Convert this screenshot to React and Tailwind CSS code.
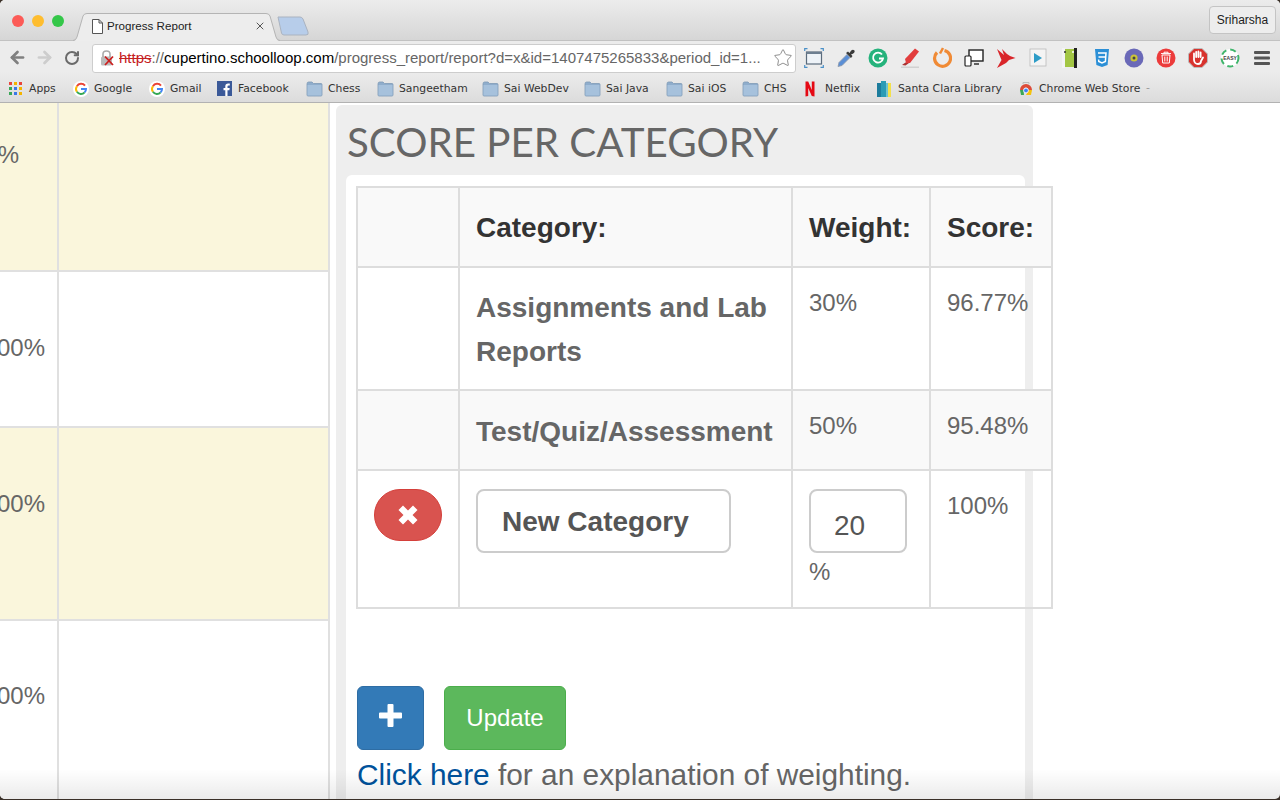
import React from "react";
import { ArrowLeft, ArrowRight, RotateCw, Star, X } from "lucide-react";

// bookmark bar icons
const FolderIcon = () => (
  <svg width="17" height="16" viewBox="0 0 17 16">
    <path d="M1 3 Q1 1 2.5 1 H6 L7.5 2.5 H15 Q16 2.5 16 3.5 V14 Q16 15 15 15 H2 Q1 15 1 14 Z" fill="#8fadcc" stroke="#7f9ab6" strokeWidth="0.8" />
    <rect x="1.5" y="4" width="14" height="10.5" fill="#a6c1dc" />
  </svg>
);

const GoogleIcon = () => (
  <svg width="16" height="16" viewBox="0 0 16 16">
    <circle cx="8" cy="8" r="8" fill="#fff" />
    <path d="M12 4.6 A5 5 0 0 0 3.9 5.2" fill="none" stroke="#ea4335" strokeWidth="2" />
    <path d="M3.9 5.2 A5 5 0 0 0 3.9 10.8" fill="none" stroke="#fbbc05" strokeWidth="2" />
    <path d="M3.9 10.8 A5 5 0 0 0 11.6 11.4" fill="none" stroke="#34a853" strokeWidth="2" />
    <path d="M11.6 11.4 A5 5 0 0 0 13 8 H8" fill="none" stroke="#4285f4" strokeWidth="2" />
  </svg>
);

const AppsIcon = () => {
  const colors = ["#e8453c", "#f4b400", "#e8453c", "#3aa757", "#3b78e7", "#f4b400", "#3aa757", "#3b78e7", "#f4b400"];
  return (
    <div className="grid grid-cols-3 gap-[2px] w-[13px]">
      {colors.map((c, i) => (
        <svg key={i} width="3" height="3"><rect width="3" height="3" fill={c} /></svg>
      ))}
    </div>
  );
};

const FacebookIcon = () => (
  <svg width="15" height="15" viewBox="0 0 15 15">
    <rect width="15" height="15" fill="#3b5998" />
    <path d="M10.5 15 V9.2 H12.4 L12.7 7 H10.5 V5.6 Q10.5 4.5 11.7 4.5 H12.8 V2.5 H11.2 Q8.3 2.5 8.3 5.3 V7 H6.5 V9.2 H8.3 V15 Z" fill="#fff" />
  </svg>
);

const NetflixIcon = () => (
  <svg width="10" height="16" viewBox="0 0 10 16">
    <path d="M0.5 0.5 H3.2 L6.8 9 V0.5 H9.5 V15.5 L6.8 15 L3.2 7 V15 L0.5 15.5 Z" fill="#e50914" />
  </svg>
);

const LibraryIcon = () => (
  <svg width="14" height="17" viewBox="0 0 14 17">
    <rect x="0" y="3" width="4" height="14" fill="#1c7c9c" />
    <rect x="4" y="1" width="5" height="16" fill="#2a9bb5" />
    <rect x="9" y="3" width="2" height="14" fill="#6fc3d0" />
    <rect x="11" y="3" width="3" height="14" fill="#f3e04b" />
  </svg>
);

const WebStoreIcon = () => (
  <svg width="14" height="16" viewBox="0 0 14 16">
    <path d="M4 3 V1.5 H10 V3" fill="none" stroke="#bbb" strokeWidth="1" />
    <path d="M1 9 A6 6 0 0 1 13 9 H9.5 A2.5 2.5 0 0 0 4.5 9 Z" fill="#dd4b39" />
    <path d="M1 9 H4.5 L5 14 H2 Z" fill="#3aa757" />
    <path d="M9.5 9 H13 L12 14 H7 Z" fill="#f4c20d" />
    <circle cx="7" cy="9.5" r="2.4" fill="#4285f4" stroke="#fff" strokeWidth="0.8" />
  </svg>
);

const bookmarks = [
  { label: "Apps", icon: <AppsIcon />, width: "w-[64px]", gap: "gap-[7px]" },
  { label: "Google", icon: <GoogleIcon />, width: "w-[76px]", gap: "gap-[5px]" },
  { label: "Gmail", icon: <GoogleIcon />, width: "w-[68px]", gap: "gap-[5px]" },
  { label: "Facebook", icon: <FacebookIcon />, width: "w-[89px]", gap: "gap-[6px]" },
  { label: "Chess", icon: <FolderIcon />, width: "w-[71px]", gap: "gap-[5px]" },
  { label: "Sangeetham", icon: <FolderIcon />, width: "w-[105px]", gap: "gap-[5px]" },
  { label: "Sai WebDev", icon: <FolderIcon />, width: "w-[102px]", gap: "gap-[5px]" },
  { label: "Sai Java", icon: <FolderIcon />, width: "w-[82px]", gap: "gap-[5px]" },
  { label: "Sai iOS", icon: <FolderIcon />, width: "w-[76px]", gap: "gap-[5px]" },
  { label: "CHS", icon: <FolderIcon />, width: "w-[63px]", gap: "gap-[5px]" },
  { label: "Netflix", icon: <NetflixIcon />, width: "w-[72px]", gap: "gap-[10px]" },
  { label: "Santa Clara Library", icon: <LibraryIcon />, width: "w-[142px]", gap: "gap-[7px]" },
  { label: "Chrome Web Store", icon: <WebStoreIcon />, width: "w-[127px]", gap: "gap-[6px]" },
];

// extension icons in the toolbar
const extensions = [
  <svg width="20" height="20" viewBox="0 0 20 20" key="capture">
    <rect x="2.5" y="4" width="15" height="12" fill="#eef3f8" stroke="#5a6b7c" strokeWidth="1.2" />
    <rect x="2.5" y="4" width="15" height="2" fill="#6d7f91" />
    <path d="M0.7 3 V0.7 H3.5 M16.5 0.7 H19.3 V3 M19.3 17 V19.3 H16.5 M3.5 19.3 H0.7 V17" fill="none" stroke="#4a90c8" strokeWidth="1.2" />
  </svg>,
  <svg width="20" height="20" viewBox="0 0 20 20" key="dropper">
    <path d="M2 18.5 L3 14.5 L11 6.5 L14 9.5 L6 17.5 Z" fill="#5b8fd6" stroke="#8a97a8" strokeWidth="0.8" />
    <path d="M10 5 L15 10 L16.5 8 L15 6.5 Q19.5 5 18.5 2.5 Q16 0 13.5 5 L12 3.5 Z" fill="#3a3a3a" />
  </svg>,
  <svg width="20" height="20" viewBox="0 0 20 20" key="grammarly">
    <circle cx="10" cy="10" r="9.5" fill="#25b37c" />
    <path d="M14 6.5 A5 5 0 1 0 15 10.5 H11" fill="none" stroke="#fff" strokeWidth="1.8" />
  </svg>,
  <svg width="20" height="22" viewBox="0 0 20 22" key="marker">
    <path d="M5.5 15.5 L2 18 L5.5 18.5 L9 16 Z" fill="#a33" />
    <path d="M5 12 L15 1.5 L19 4.5 L10 16 L6 16 Z" fill="#e23d3d" />
    <rect x="1" y="19.5" width="18" height="1.4" fill="#cfcfcf" />
  </svg>,
  <svg width="20" height="22" viewBox="0 0 20 22" key="ring">
    <path d="M5 5.5 A8 8 0 1 0 12.5 3.5" fill="none" stroke="#f08a35" strokeWidth="3.2" />
    <path d="M8 6.5 L11 1" stroke="#f08a35" strokeWidth="2.5" />
  </svg>,
  <svg width="20" height="18" viewBox="0 0 20 18" key="devices">
    <rect x="5" y="1" width="14" height="11" fill="#fff" stroke="#222" strokeWidth="1.4" />
    <rect x="1" y="7" width="6" height="10" rx="1" fill="#fff" stroke="#222" strokeWidth="1.2" />
    <path d="M10 15 H15" stroke="#222" strokeWidth="1.4" />
  </svg>,
  <svg width="20" height="20" viewBox="0 0 20 20" key="bird">
    <path d="M1 1 L8 7 L6 1 L11 6 L14 8 L19.5 10 L13 12 L10 15 L1 20 L5.5 12 Z" fill="#d9252a" />
  </svg>,
  <svg width="18" height="20" viewBox="0 0 18 20" key="play">
    <rect x="1" y="1" width="16" height="17" fill="#f4f4f4" stroke="#bbb" strokeWidth="0.8" />
    <path d="M5 5 L13 10 L5 15 Z" fill="#2d9cc7" />
  </svg>,
  <svg width="20" height="22" viewBox="0 0 20 22" key="book">
    <rect x="4" y="2" width="10" height="18" fill="#a3c644" />
    <rect x="14" y="1" width="3" height="20" fill="#222" />
    <rect x="2" y="1" width="3" height="20" fill="#f4f4f4" />
    <circle cx="5" cy="5" r="1" fill="#333" />
    <circle cx="13" cy="5" r="1" fill="#fff" />
  </svg>,
  <svg width="16" height="20" viewBox="0 0 16 20" key="css">
    <path d="M1 1 H15 L13.6 17 L8 19 L2.4 17 Z" fill="#2b8fd6" />
    <path d="M4 5 H12 L11.4 13.5 L8 15 L4.8 13.5 L4.6 11.5 M4.5 9 H11.5" fill="none" stroke="#fff" strokeWidth="1.5" />
  </svg>,
  <svg width="20" height="20" viewBox="0 0 20 20" key="purple">
    <circle cx="10" cy="10" r="9.5" fill="#6a69b8" />
    <circle cx="10" cy="10" r="3.6" fill="#c9c43a" />
    <circle cx="10" cy="10" r="1.5" fill="#444" />
  </svg>,
  <svg width="20" height="20" viewBox="0 0 20 20" key="trash">
    <circle cx="10" cy="10" r="9.5" fill="#ec3b3b" />
    <path d="M6 7 H14 L13.3 15 H6.7 Z M5 5.6 H15 M8 5.6 V4.2 H12 V5.6 M8.8 8.5 V13.5 M11.2 8.5 V13.5" fill="none" stroke="#fff" strokeWidth="1" />
  </svg>,
  <svg width="20" height="20" viewBox="0 0 20 20" key="stop">
    <path d="M6 0.5 H14 L19.5 6 V14 L14 19.5 H6 L0.5 14 V6 Z" fill="#d8332e" stroke="#bbb" strokeWidth="1" />
    <path d="M6 9 V5.5 M8.2 9 V3.8 M10.4 9 V3.5 M12.6 9 V4.5 M6 8 V12 Q6.5 16 10 16 Q13 16 13 13 L15 9.5" fill="none" stroke="#fff" strokeWidth="1.8" strokeLinecap="round" />
  </svg>,
  <svg width="20" height="20" viewBox="0 0 20 20" key="easy">
    <circle cx="10" cy="10" r="9" fill="#fff" />
    <circle cx="10" cy="10" r="8.5" fill="none" stroke="#3fb56b" strokeWidth="2" strokeDasharray="6 4" />
    <text x="10" y="12" textAnchor="middle" fontSize="5" fontWeight="700" fill="#444" fontFamily="Liberation Sans">EASY</text>
  </svg>,
  <svg width="16" height="14" viewBox="0 0 16 14" key="menu">
    <rect y="0" width="16" height="3" rx="1" fill="#555" />
    <rect y="5.5" width="16" height="3" rx="1" fill="#555" />
    <rect y="11" width="16" height="3" rx="1" fill="#555" />
  </svg>,
];

const BrowserChrome = () => (
  <div className="shrink-0">
    {/* title bar */}
    <div className="h-[40px] bg-gradient-to-b from-[#ececec] to-[#d6d6d6] flex relative z-10">
      <div className="flex items-center gap-[8px] pl-[12px] pb-[1px] h-[42px] w-[73px] shrink-0">
        <span className="w-[12px] h-[12px] rounded-full bg-[#fc5b57]" />
        <span className="w-[12px] h-[12px] rounded-full bg-[#febd2f]" />
        <span className="w-[12px] h-[12px] rounded-full bg-[#34c749]" />
      </div>
      {/* tab */}
      <div className="relative mt-[13px] w-[207px] h-[27px] pb-[1px] flex items-center">
        <svg width="207" height="28" viewBox="0 0 207 28" className="absolute left-0 top-0">
          <path d="M0 28 Q3 28 4 24 L10 3 Q11 0.5 14 0.5 H193 Q196 0.5 197 3 L203 24 Q204 28 207 28 Z" fill="#ededed" />
          <path d="M0 27.5 Q3 27.5 4 24 L10 3 Q11 0.5 14 0.5 H193 Q196 0.5 197 3 L203 24 Q204 27.5 207 27.5" fill="none" stroke="#b4b4b4" strokeWidth="1" />
        </svg>
        <svg width="11" height="15" viewBox="0 0 11 15" className="relative ml-[19px] mr-[4px]">
          <path d="M0.5 0.5 H7 L10.5 4 V14.5 H0.5 Z M7 0.5 V4 H10.5" fill="#fff" stroke="#555" strokeWidth="1" />
        </svg>
        <span className="relative text-[11.6px] text-[#222]">Progress Report</span>
        <X size={12} strokeWidth={2} className="absolute left-[181px] top-[7px] text-[#555]" />
      </div>
      {/* new tab button */}
      <svg width="33" height="20" viewBox="0 0 33 20" className="mt-[16px] -ml-[3px]">
        <path d="M1 1 H23 Q25 1 26 3 L31 16 Q32 19 29 19 H7 Q5 19 4.5 17 Z" fill="#b7cdea" stroke="#aab3c0" strokeWidth="1" />
      </svg>
      <div className="absolute right-[4px] top-[6px] h-[28px] w-[67px] border border-[#c4c4c4] rounded-[4px] bg-[#ededed] text-[12px] text-[#222] flex items-center justify-center">
        Sriharsha
      </div>
    </div>

    {/* toolbar */}
    <div className="h-[32px] bg-[#ececec] border-t border-[#c2c2c2] flex">
      <div className="w-[92px] shrink-0 flex items-center pl-[8px] pt-[2px] gap-[8px] text-[#808080]">
        <ArrowLeft size={19} strokeWidth={3.4} />
        <ArrowRight size={19} strokeWidth={3.4} className="text-[#cdcdcd]" />
        <RotateCw size={16} strokeWidth={3} className="text-[#6a6a6a] ml-[2px]" />
      </div>
      <div className="w-[704px] h-[29px] mt-[3px] bg-white border border-[#cdcdcd] rounded-[3px] flex items-center relative">
        <svg width="16" height="17" viewBox="0 0 16 17" className="ml-[7px] mr-[3px] shrink-0">
          <rect x="1" y="6.5" width="11" height="9" rx="1.5" fill="#bbb" />
          <path d="M3 7 V4 Q3 1 6.5 1 Q10 1 10 4 V7" fill="none" stroke="#aaa" strokeWidth="1.6" />
          <path d="M5 6.5 L13 15 M13 6.5 L5 15" stroke="#cc1f1f" strokeWidth="1.8" />
        </svg>
        <span className="text-[15px] whitespace-nowrap text-[#666]">
          <span className="text-[#c5211f] line-through">https</span>://<span className="text-black">cupertino.schoolloop.com</span>/progress_report/report?d=x&amp;id=1407475265833&amp;period_id=1...
        </span>
        <Star size={20} strokeWidth={1} className="absolute right-[2px] top-[3px] text-[#777]" />
      </div>
      <div className="flex ml-[2px] pt-[2px]">
        {extensions.map((icon) => (
          <div key={icon.key} className="w-[32px] h-[30px] flex items-center justify-center">{icon}</div>
        ))}
      </div>
    </div>

    {/* bookmarks bar */}
    <div className="h-[31px] bg-gradient-to-b from-[#ececec] to-[#dcdcdc] border-b border-[#b2b2b2] flex items-center pl-[9px] pt-[3px] text-[10.8px] text-[#333] font-['DejaVu_Sans',sans-serif]">
      {bookmarks.map((b) => (
        <div key={b.label} className={`flex items-center shrink-0 ${b.width} ${b.gap}`}>
          {b.icon}
          <span className="whitespace-nowrap pt-[1px]">{b.label}</span>
        </div>
      ))}
      <span className="text-[#999]">-</span>
    </div>
  </div>
);

// left table, cut off by the edge of the window
const leftRows = [
  { height: "h-[169px]", bg: "bg-[#faf6dc]", pad: "pt-[36px] pr-[38px]" },
  { height: "h-[156px]", bg: "bg-white", pad: "pt-[60px] pr-[12px]" },
  { height: "h-[193px]", bg: "bg-[#faf6dc]", pad: "pt-[60px] pr-[12px]" },
  { height: "h-[190px]", bg: "bg-white", pad: "pt-[59px] pr-[12px]" },
];

const LeftTable = () => (
  <div className="w-[336px] shrink-0">
    <div className="w-[330px] border-r-2 border-[#e0e0e0]">
      {leftRows.map((r, i) => (
        <div key={i} className={`flex border-b-2 border-[#e0e0e0] ${r.height} ${r.bg}`}>
          <div className={`w-[57px] shrink-0 flex justify-end items-start text-[24px] leading-[32px] text-[#666] whitespace-nowrap ${r.pad}`}>
            100%
          </div>
          <div className="flex-1 border-l-2 border-[#e0e0e0]" />
        </div>
      ))}
    </div>
  </div>
);

const cellCls = "border-2 border-[#dddddd] px-[16px] align-top";

const ScorePanel = () => (
  <div className="w-[697px] shrink-0 mt-[2px] bg-[#eeeeee] rounded-t-[6px] pt-[12px] pl-[10px] pr-[8px] h-[800px]">
    <h2 className="font-['Lato',sans-serif] text-[40.3px] leading-[50px] text-[#666] ml-[1px] mb-[8px] whitespace-nowrap">
      SCORE PER CATEGORY
    </h2>
    <div className="bg-white rounded-t-[6px] pt-[11px] px-[10px] h-[640px]">
      <table className="w-[695px] table-fixed border-collapse text-[24px] text-[#666]">
        <colgroup>
          <col className="w-[102px]" />
          <col className="w-[333px]" />
          <col className="w-[138px]" />
          <col className="w-[122px]" />
        </colgroup>
        <tbody>
          <tr className="h-[80px] bg-[#f9f9f9] text-[28px] font-bold text-[#333]">
            <th className={cellCls} />
            <th className={`${cellCls} text-left !align-middle pt-[2px]`}>Category:</th>
            <th className={`${cellCls} text-left !align-middle pt-[2px]`}>Weight:</th>
            <th className={`${cellCls} text-left !align-middle pt-[2px]`}>Score:</th>
          </tr>
          <tr className="h-[123px]">
            <td className={cellCls} />
            <td className={`${cellCls} pt-[18px] text-[28px] leading-[44px] font-bold`}>Assignments and Lab Reports</td>
            <td className={`${cellCls} pt-[17px] leading-[36px]`}>30%</td>
            <td className={`${cellCls} pt-[17px] leading-[36px] whitespace-nowrap`}>96.77%</td>
          </tr>
          <tr className="h-[80px] bg-[#f9f9f9]">
            <td className={cellCls} />
            <td className={`${cellCls} pt-[19px] text-[28px] leading-[44px] font-bold whitespace-nowrap`}>Test/Quiz/Assessment</td>
            <td className={`${cellCls} pt-[17px] leading-[36px]`}>50%</td>
            <td className={`${cellCls} pt-[17px] leading-[36px] whitespace-nowrap`}>95.48%</td>
          </tr>
          <tr className="h-[138px]">
            <td className={`${cellCls} pt-[18px]`}>
              <button className="w-[68px] h-[52px] rounded-full bg-[#d9534f] border border-[#d43f3a] flex items-center justify-center">
                <svg width="20" height="20" viewBox="0 0 20 20">
                  <path d="M5 0.5 L10 5.5 L15 0.5 L19.5 5 L14.5 10 L19.5 15 L15 19.5 L10 14.5 L5 19.5 L0.5 15 L5.5 10 L0.5 5 Z" fill="#fff" />
                </svg>
              </button>
            </td>
            <td className={`${cellCls} pt-[18px]`}>
              <div className="h-[64px] w-[255px] border-2 border-[#cccccc] rounded-[8px] pl-[24px] flex items-center text-[28px] font-bold text-[#555] pt-[2px]">
                New Category
              </div>
            </td>
            <td className={`${cellCls} pt-[18px]`}>
              <div className="h-[64px] w-[98px] border-2 border-[#cccccc] rounded-[8px] pl-[23px] pt-[10px] flex items-center text-[28px] text-[#555]">
                20
              </div>
              <div className="leading-[36px] mt-[1px]">%</div>
            </td>
            <td className={`${cellCls} pt-[17px] leading-[36px]`}>100%</td>
          </tr>
        </tbody>
      </table>
      <div className="flex gap-[20px] mt-[77px] ml-[1px]">
        <button className="w-[67px] h-[64px] rounded-[6px] bg-[#337ab7] border border-[#2e6da4] flex items-center justify-center pb-[6px]">
          <svg width="23" height="23" viewBox="0 0 23 23">
            <path d="M8.5 1 Q8.5 0 9.5 0 H13.5 Q14.5 0 14.5 1 V8.5 H22 Q23 8.5 23 9.5 V13.5 Q23 14.5 22 14.5 H14.5 V22 Q14.5 23 13.5 23 H9.5 Q8.5 23 8.5 22 V14.5 H1 Q0 14.5 0 13.5 V9.5 Q0 8.5 1 8.5 H8.5 Z" fill="#fff" />
          </svg>
        </button>
        <button className="w-[122px] h-[64px] rounded-[6px] bg-[#5cb85c] border border-[#4cae4c] text-white text-[24px]">
          Update
        </button>
      </div>
      <p className="text-[29.85px] leading-[50px] text-[#666] whitespace-nowrap ml-[1px]">
        <a href="#" className="text-[#00529b]">Click here</a> for an explanation of weighting.
      </p>
    </div>
  </div>
);

export default function App() {
  return (
    <div className="h-screen w-full overflow-hidden bg-[#3a3028] relative">
      <div className="h-[calc(100%-1px)] rounded-[5px] overflow-hidden bg-white flex flex-col font-['Liberation_Sans',sans-serif] relative">
        <BrowserChrome />
        <div className="flex-1 min-h-0 flex overflow-hidden">
          <LeftTable />
          <ScorePanel />
        </div>
        {/* window shadow along the bottom edge */}
        <div className="absolute left-0 right-0 bottom-0 h-[30px] bg-gradient-to-b from-transparent to-black/8 pointer-events-none" />
      </div>
    </div>
  );
}
